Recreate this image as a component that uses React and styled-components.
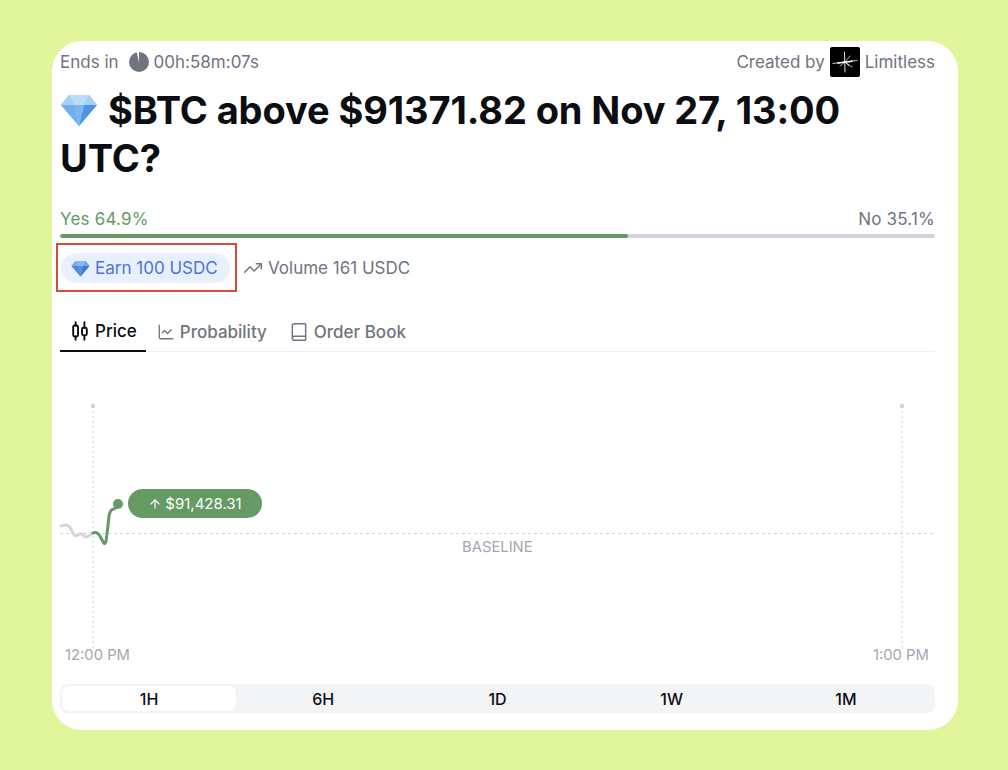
import React from "react";
import styled, { createGlobalStyle } from "styled-components";
import { TrendingUp, ChartLine, Book, ArrowUp } from "lucide-react";

const Global = createGlobalStyle`
  html, body { margin: 0; padding: 0; background: #e1f59b; }
  body { font-family: Inter, "Liberation Sans", sans-serif; }
`;

const Page = styled.div`
  width: 1008px;
  height: 770px;
  padding: 41px 50px 40px 52px;
  box-sizing: border-box;
  overflow: hidden;
`;

const Card = styled.main`
  height: 689px;
  box-sizing: border-box;
  background: #fff;
  border-radius: 30px;
  padding: 9px 23px 0 8px;
  display: flex;
  flex-direction: column;
`;

const TopRow = styled.div`
  display: flex;
  justify-content: space-between;
  align-items: center;
  height: 24px;
  font-size: 17px;
  color: #6f7480;
`;

const Meta = styled.div`
  display: flex;
  align-items: center;
  gap: ${(p) => p.$gap || 5}px;
`;

const Title = styled.h1`
  margin: 12px 0 0;
  font-size: 38px;
  line-height: 48px;
  font-weight: 700;
  letter-spacing: -0.1px;
  color: #0b0d12;
  width: 860px;
`;

const Odds = styled.div`
  display: flex;
  justify-content: space-between;
  margin-top: 27px;
  font-size: 17px;
  line-height: 20px;
  letter-spacing: 0.2px;
`;

const Yes = styled.span`
  color: #659a64;
`;

const No = styled.span`
  color: #6f7480;
`;

const Track = styled.div`
  height: 4px;
  margin-top: 5px;
  background: #d1d5db;
  border-radius: 2px;
  overflow: hidden;
`;

const Fill = styled.div`
  height: 100%;
  background: #659a64;
  border-radius: 2px;
`;

const StatsRow = styled.div`
  display: flex;
  align-items: center;
  margin-top: 5px;
  margin-left: -4px;
`;

const Highlight = styled.div`
  width: 181px;
  height: 49px;
  box-sizing: border-box;
  border: 2px solid #d14f3a;
  padding: 8px 0 0 3px;
`;

const Earn = styled.div`
  width: 169px;
  height: 30px;
  box-sizing: border-box;
  background: #e9f0fd;
  border-radius: 15px;
  display: flex;
  align-items: center;
  gap: 5px;
  padding-left: 10px;
  font-size: 17px;
  color: #4b73e0;
`;

const Volume = styled.div`
  display: flex;
  align-items: center;
  gap: 5px;
  margin-left: 6px;
  font-size: 17px;
  color: #6f7480;
`;

const Tabs = styled.nav`
  display: flex;
  height: 39px;
  margin-top: 20px;
  border-bottom: 1px solid #eef0f2;
`;

const Tab = styled.div`
  display: flex;
  align-items: center;
  gap: ${(p) => (p.$active ? 4 : 5)}px;
  height: 40px;
  box-sizing: border-box;
  padding: 0 ${(p) => (p.$active ? 9 : 11)}px 0 ${(p) => (p.$active ? 9 : 11)}px;
  font-size: 17px;
  font-weight: 500;
  color: ${(p) => (p.$active ? "#0b0d12" : "#6f7480")};
  border-bottom: ${(p) => (p.$active ? "2px solid #0b0d12" : "0")};
`;

const Chart = styled.div`
  position: relative;
  height: 330px;
  margin-top: 1px;
`;

const ChartSvg = styled.svg`
  display: block;
  width: 875px;
  height: 330px;
  overflow: visible;
`;

const AxisText = styled.text`
  font-family: Inter, "Liberation Sans", sans-serif;
  font-size: 14.8px;
  fill: #a3a7b0;
`;

const PricePill = styled.div`
  position: absolute;
  left: 68px;
  top: 136px;
  width: 134px;
  height: 29px;
  background: #659a64;
  border-radius: 15px;
  color: #fff;
  font-size: 15px;
  display: flex;
  align-items: center;
  justify-content: center;
  gap: 3px;
`;

const Ranges = styled.div`
  display: grid;
  grid-template-columns: repeat(5, 1fr);
  height: 29px;
  box-sizing: border-box;
  margin-top: 1px;
  padding: 2px;
  background: #f3f4f6;
  border-radius: 8px;
`;

const Range = styled.div`
  display: flex;
  align-items: center;
  justify-content: center;
  font-size: 16px;
  font-weight: 500;
  color: #0b0d12;
  background: ${(p) => (p.$active ? "#fff" : "transparent")};
  border-radius: 7px;
`;

const light = ["#8cc4f2", "#b8ddf8", "#6fb0ec", "#4f94e4", "#7db4ee", "#a6d0f4"];
const deep = ["#5f97ea", "#8ab9f2", "#4f86e4", "#3f74d8", "#5a90e8", "#79aaf0"];

const Gem = ({ className, tones = light }) => (
  <svg className={className} viewBox="0 0 38 34">
    <path d="M9 2h20l8 10-18 21L1 12z" fill={tones[0]} />
    <path d="M9 2h20l-5 10H14z" fill={tones[1]} />
    <path d="M1 12h13l5 21z" fill={tones[2]} />
    <path d="M37 12H24l-5 21z" fill={tones[3]} />
    <path d="M14 12h10l-5 21z" fill={tones[4]} />
    <path d="M9 2l5 10H1zM29 2l-5 10h13z" fill={tones[5]} />
  </svg>
);

const TitleGem = styled(Gem)`
  width: 38px;
  height: 34px;
  vertical-align: -3px;
  margin-right: 10px;
`;

const SmallGem = styled(Gem)`
  width: 19px;
  height: 17px;
  flex: none;
`;

const ClockPie = () => (
  <svg width="20" height="20" viewBox="0 0 20 20">
    <circle cx="10" cy="10" r="10" fill="#6f7480" />
    <path d="M10 10.5L10 -0.5L7.6 -0.5z" fill="#fff" />
  </svg>
);

const CandlesIcon = () => (
  <svg width="22" height="22" viewBox="0 0 20 20" fill="none" stroke="#0b0d12" strokeWidth="1.7" strokeLinecap="round" strokeLinejoin="round">
    <path d="M6 2v3M6 15v3M14 2v5M14 14v4" />
    <rect x="3.8" y="5" width="4.4" height="10" rx="1.4" />
    <rect x="11.8" y="7" width="4.4" height="7" rx="1.4" />
  </svg>
);

const Logo = () => (
  <svg width="30" height="30" viewBox="0 0 30 30">
    <rect width="30" height="30" rx="2" fill="#000" />
    <g stroke="#fff" strokeLinecap="round">
      <path d="M3 16.5L27 13.5" strokeWidth="0.8" />
      <path d="M8 16L22 14.2" strokeWidth="1.6" />
      <path d="M14.5 5L15 25" strokeWidth="0.9" />
      <path d="M15 15L22 20M15 15L10 19M15 15L20 9M15 15L19 19" strokeWidth="0.7" />
    </g>
  </svg>
);

export default function App() {
  return (
    <Page>
      <Global />
      <Card>
        <TopRow>
          <Meta $gap={10}>
            Ends in
            <Meta>
              <ClockPie />
              00h:58m:07s
            </Meta>
          </Meta>
          <Meta>
            Created by
            <Logo />
            Limitless
          </Meta>
        </TopRow>
        <Title>
          <TitleGem />
          $BTC above $91371.82 on Nov 27, 13:00 UTC?
        </Title>
        <Odds>
          <Yes>Yes 64.9%</Yes>
          <No>No 35.1%</No>
        </Odds>
        <Track>
          <Fill style={{ width: "64.9%" }} />
        </Track>
        <StatsRow>
          <Highlight>
            <Earn>
              <SmallGem tones={deep} />
              Earn 100 USDC
            </Earn>
          </Highlight>
          <Volume>
            <TrendingUp size={20} strokeWidth={1.75} />
            Volume 161 USDC
          </Volume>
        </StatsRow>
        <Tabs>
          <Tab $active>
            <CandlesIcon />
            Price
          </Tab>
          <Tab>
            <ChartLine size={18} strokeWidth={1.75} />
            Probability
          </Tab>
          <Tab>
            <Book size={20} strokeWidth={1.75} />
            Order Book
          </Tab>
        </Tabs>
        <Chart>
          <ChartSvg viewBox="0 0 875 330">
            <g stroke="#cfd1d6" strokeWidth="1" strokeDasharray="2 3" fill="none">
              <path d="M33 53V295" />
              <path d="M842 53V295" />
              <path d="M0 180.5H875" strokeDasharray="3 3" />
            </g>
            <circle cx="33" cy="53" r="2.2" fill="#cfd1d6" />
            <circle cx="842" cy="53" r="2.2" fill="#cfd1d6" />
            <path
              d="M1 173C6 171 9 172 11 176C13 181 15 184 18 182C21 179 23 182 25 184C27 185 30 181 33 180"
              fill="none"
              stroke="#d5d6da"
              strokeWidth="3"
              strokeLinecap="round"
            />
            <path
              d="M33 180C37 178 40 182 42 187C44 191 45 192 46 188C47 182 48 172 49 163C50 157 52 156 54 156C56 155 57 152 58 151"
              fill="none"
              stroke="#659a64"
              strokeWidth="3"
              strokeLinecap="round"
            />
            <circle cx="58" cy="151" r="5" fill="#659a64" />
            <AxisText x="402" y="199">BASELINE</AxisText>
            <AxisText x="5" y="307">12:00 PM</AxisText>
            <AxisText x="813" y="307">1:00 PM</AxisText>
          </ChartSvg>
          <PricePill>
            <ArrowUp size={14} strokeWidth={2} />
            $91,428.31
          </PricePill>
        </Chart>
        <Ranges>
          <Range $active>1H</Range>
          <Range>6H</Range>
          <Range>1D</Range>
          <Range>1W</Range>
          <Range>1M</Range>
        </Ranges>
      </Card>
    </Page>
  );
}
